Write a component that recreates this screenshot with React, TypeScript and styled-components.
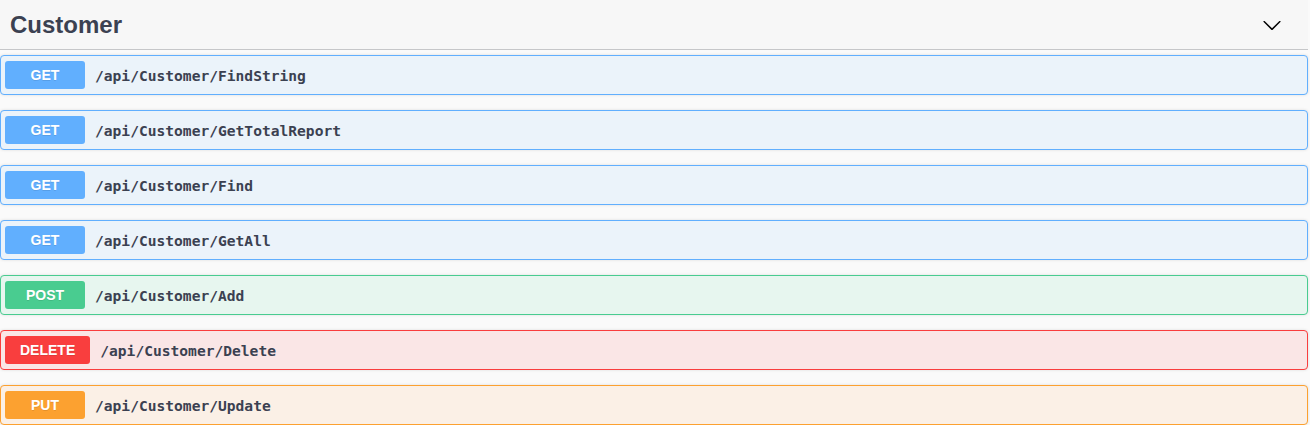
import * as React from "react";
import styled, { createGlobalStyle } from "styled-components";

const GlobalStyle = createGlobalStyle`
  body {
    margin: 0;
    background: #fafafa;
    font-family: "Liberation Sans", Arial, sans-serif;
  }
`;

type Method = "GET" | "POST" | "DELETE" | "PUT";

const colors: Record<Method, { main: string; bg: string }> = {
  GET: { main: "#61affe", bg: "#ebf3fa" },
  POST: { main: "#49cc90", bg: "#e7f6ef" },
  DELETE: { main: "#f93e3e", bg: "#fae6e6" },
  PUT: { main: "#fca130", bg: "#fbf0e6" },
};

const Section = styled.div`
  padding-right: 2px;
`;

const TagHeader = styled.div`
  display: flex;
  align-items: center;
  justify-content: space-between;
  height: 49px;
  padding: 0 26px 0 10px;
  background: #f7f7f7;
  border-bottom: 1px solid #c6c7c9;
  margin-bottom: 5px;
`;

const TagTitle = styled.h3`
  margin: 0;
  font-size: 24px;
  font-weight: 700;
  color: #3b4151;
  font-family: "Liberation Sans", Arial, sans-serif;
`;

const Arrow = styled.svg`
  width: 20px;
  height: 20px;
  margin-top: 1px;
`;

const List = styled.div`
  display: flex;
  flex-direction: column;
  gap: 15px;
`;

const Operation = styled.div<{ $method: Method }>`
  display: flex;
  align-items: center;
  height: 38px;
  padding: 0 4px;
  border: 1px solid ${(p) => colors[p.$method].main};
  background: ${(p) => colors[p.$method].bg};
  border-radius: 4px;
  box-shadow: 0 0 3px rgba(0, 0, 0, 0.12);
`;

const Badge = styled.span<{ $method: Method }>`
  box-sizing: border-box;
  min-width: 80px;
  height: 28px;
  padding: 0 15px;
  display: flex;
  align-items: center;
  justify-content: center;
  border-radius: 3px;
  background: ${(p) => colors[p.$method].main};
  color: #fff;
  font-size: 14px;
  font-weight: 700;
  text-shadow: 0 1px 0 rgba(0, 0, 0, 0.1);
`;

const Path = styled.span`
  padding: 0 10px;
  font-family: "DejaVu Sans Mono", "Liberation Mono", monospace;
  font-size: 14.6px;
  font-weight: 700;
  color: #3b4151;
`;

const operations: { method: Method; path: string }[] = [
  { method: "GET", path: "/api/Customer/FindString" },
  { method: "GET", path: "/api/Customer/GetTotalReport" },
  { method: "GET", path: "/api/Customer/Find" },
  { method: "GET", path: "/api/Customer/GetAll" },
  { method: "POST", path: "/api/Customer/Add" },
  { method: "DELETE", path: "/api/Customer/Delete" },
  { method: "PUT", path: "/api/Customer/Update" },
];

export default function App() {
  return (
    <>
      <GlobalStyle />
      <Section>
        <TagHeader>
          <TagTitle>Customer</TagTitle>
          <Arrow viewBox="0 0 20 20">
            <path
              fill="#000"
              d="M17.418 6.109c.272-.268.709-.268.979 0s.271.701 0 .969l-7.908 7.83c-.27.268-.707.268-.979 0l-7.908-7.83c-.27-.268-.27-.701 0-.969.271-.268.709-.268.979 0L10 13.25l7.418-7.141z"
            />
          </Arrow>
        </TagHeader>
        <List>
          {operations.map((op) => (
            <Operation key={op.path} $method={op.method}>
              <Badge $method={op.method}>{op.method}</Badge>
              <Path>{op.path}</Path>
            </Operation>
          ))}
        </List>
      </Section>
    </>
  );
}
